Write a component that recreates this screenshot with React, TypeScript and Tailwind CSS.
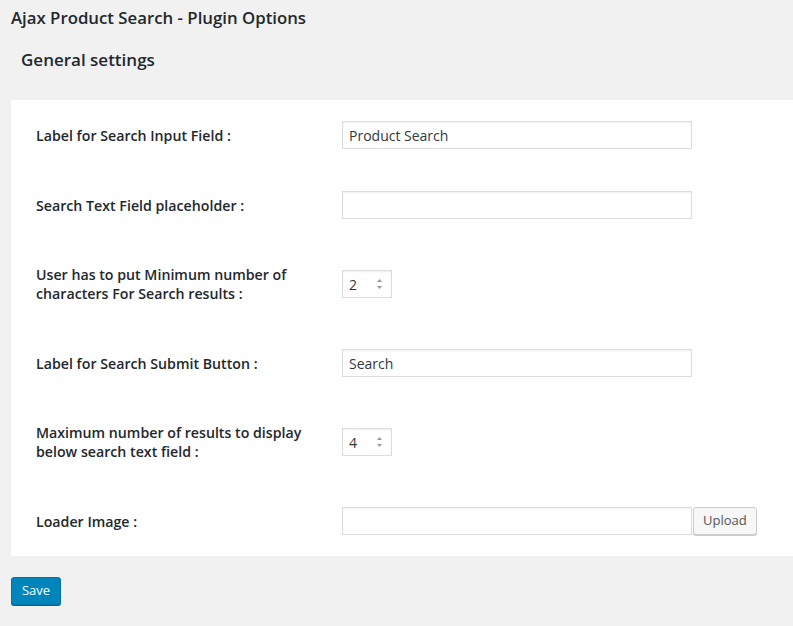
import React from "react";

const font = { fontFamily: '"Open Sans", "Noto Sans", sans-serif' };

function TextBox({ value, w = "w-[350px]" }: { value?: string; w?: string }) {
  return (
    <div
      className={`${w} h-[28px] flex items-center px-[6px] bg-white border border-[#dddddd] shadow-[inset_0_1px_2px_rgba(0,0,0,0.07)] text-[14px] text-[#32373c]`}
    >
      {value}
    </div>
  );
}

function NumBox({ value }: { value: string }) {
  return (
    <div className="w-[50px] h-[28px] flex items-center justify-between pl-[6px] pr-[8px] bg-white border border-[#dddddd] shadow-[inset_0_1px_2px_rgba(0,0,0,0.07)] text-[14px] text-[#32373c]">
      <span>{value}</span>
      <svg width="7" height="12" viewBox="0 0 7 12">
        <path d="M1 4 L3.5 1 L6 4 Z" fill="#999" />
        <path d="M1 8 L3.5 11 L6 8 Z" fill="#999" />
      </svg>
    </div>
  );
}

function Row({ label, tall, children }: { label: React.ReactNode; tall?: boolean; children: React.ReactNode }) {
  return (
    <div className={`flex items-center ${tall ? "h-[88px]" : "h-[70px]"}`}>
      <div className="w-[331px] shrink-0 pl-[25px] pr-[16px] text-[14.2px] leading-[19px] font-semibold text-[#23282d]">
        {label}
      </div>
      <div className="flex items-center">{children}</div>
    </div>
  );
}

export default function App() {
  return (
    <div className="min-h-screen bg-[#f1f1f1] text-[#23282d] pl-[11px]" style={font}>
      <div className="pt-[8px] h-[46px] text-[16.8px] leading-[20px] font-semibold">
        Ajax Product Search - Plugin Options
      </div>
      <div className="h-[54px] pl-[10px] text-[17px] leading-[22px] font-semibold pt-[3px]">
        General settings
      </div>
      <div className="bg-white">
        <Row label="Label for Search Input Field :">
          <TextBox value="Product Search" />
        </Row>
        <Row label="Search Text Field placeholder :">
          <TextBox />
        </Row>
        <Row tall label="User has to put Minimum number of characters For Search results :">
          <NumBox value="2" />
        </Row>
        <Row label="Label for Search Submit Button :">
          <TextBox value="Search" />
        </Row>
        <Row tall label="Maximum number of results to display below search text field :">
          <NumBox value="4" />
        </Row>
        <Row label="Loader Image :">
          <TextBox />
          <button className="ml-[1px] h-[28px] px-[9px] bg-[#f7f7f7] border border-[#cccccc] rounded-[3px] shadow-[0_1px_0_#cccccc] text-[13px] text-[#555555]">
            Upload
          </button>
        </Row>
      </div>
      <div className="pt-[21px]">
        <button className="h-[28px] w-[50px] bg-[#0085ba] border border-[#0073aa] rounded-[3px] shadow-[0_1px_0_#006799] text-[13px] text-white">
          Save
        </button>
      </div>
    </div>
  );
}
